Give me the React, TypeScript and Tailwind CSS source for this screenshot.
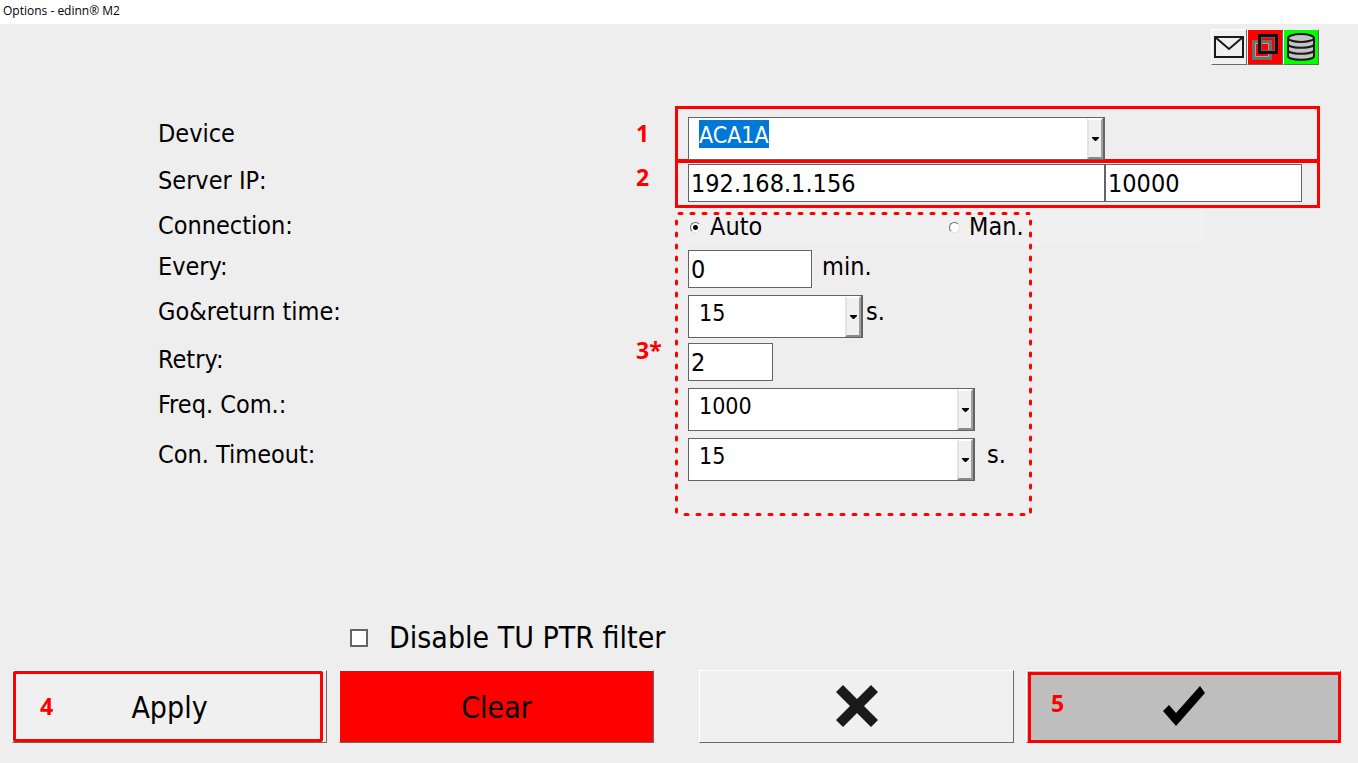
import { useState } from "react";
import type { ReactNode } from "react";

const ROW = "grid grid-cols-[478fr_39px_645fr] items-start";
const FIELD =
  "h-[38px] min-w-0 rounded-none border border-[#646464] bg-white pl-[2px] text-[25px] leading-8 text-black outline-none";

function Marker({ children }: { children: ReactNode }) {
  return (
    <span className="font-['Open_Sans','Noto_Sans',sans-serif] text-[23px] font-bold leading-8 text-[#ff0000]">
      {children}
    </span>
  );
}

type ComboProps = {
  id: string;
  options: string[];
  className: string;
  highlighted?: boolean;
};

function Combo({ id, options, className, highlighted }: ComboProps) {
  const [value, setValue] = useState(options[0]);

  return (
    <div className={`relative h-[43px] min-w-0 ${className}`}>
      <select
        id={id}
        value={value}
        onChange={(e) => setValue(e.target.value)}
        className={`h-full w-full appearance-none rounded-none border border-r-2 border-[#646464] bg-white pb-[7px] pl-[10px] text-[23px] leading-8 outline-none ${
          highlighted
            ? "bg-[linear-gradient(#0078d7,#0078d7)] bg-[length:70px_28px] bg-[position:10px_2px] bg-no-repeat text-white"
            : "text-black"
        }`}
      >
        {options.map((option) => (
          <option key={option} value={option} className="text-black">
            {option}
          </option>
        ))}
      </select>
      <span className="pointer-events-none absolute top-px right-[2px] bottom-px flex w-4 items-center justify-center border-2 border-t-white border-r-[#a0a0a0] border-b-[#8a8a8a] border-l-[#e3e3e3] bg-[#f0f0f0]">
        <svg width="7" height="4" viewBox="0 0 7 4" className="shrink-0">
          <path d="M0 0H7V1L4 4H3L0 1Z" fill="#000" />
        </svg>
      </span>
    </div>
  );
}

type RadioProps = {
  label: string;
  checked: boolean;
  onChange: () => void;
};

function Radio({ label, checked, onChange }: RadioProps) {
  return (
    <label className="flex items-center gap-[9px]">
      <input
        type="radio"
        name="connection"
        checked={checked}
        onChange={onChange}
        className="size-[11px] appearance-none rounded-full border border-t-[#696969] border-r-[#e3e3e3] border-b-[#e3e3e3] border-l-[#696969] bg-white checked:bg-[radial-gradient(circle,#000_2px,#fff_3px)]"
      />
      {label}
    </label>
  );
}

function DottedFrame() {
  const dots = {
    stroke: "#ff0000",
    strokeWidth: 3,
    strokeLinecap: "round" as const,
    strokeDasharray: "3 9",
  };

  return (
    <svg className="h-full w-[358px] max-w-full" aria-hidden="true">
      <line x1="4" y1="4.5" x2="354" y2="4.5" {...dots} />
      <line x1="1.5" y1="12" x2="1.5" y2="99%" {...dots} />
      <line x1="355.5" y1="12" x2="355.5" y2="99%" {...dots} />
      <svg y="100%" overflow="visible">
        <line x1="10" y1="-1.5" x2="351" y2="-1.5" {...dots} />
      </svg>
    </svg>
  );
}

function StatusIcons() {
  const tile =
    "flex size-9 items-center justify-center border border-t-white border-l-white border-r-[#696969] border-b-[#696969]";

  return (
    <div className="flex">
      <button type="button" aria-label="Messages" className={`${tile} bg-[#f0f0f0]`}>
        <svg width="30" height="22" viewBox="0 0 30 22" fill="none" stroke="#1a1a1a" strokeWidth="2">
          <rect x="1" y="1" width="28" height="20" />
          <path d="M1 1L15 13L29 1" />
        </svg>
      </button>
      <button type="button" aria-label="Link" className={`${tile} bg-[#ff0000]`}>
        <svg width="26" height="26" viewBox="0 0 26 26" fill="none">
          <rect x="1.5" y="7.5" width="17" height="17" stroke="#6e6e6e" strokeWidth="3" />
          <rect x="3.5" y="9.5" width="13" height="13" stroke="#a8a0a0" strokeWidth="1" />
          <rect x="7.5" y="1.5" width="17" height="17" stroke="#111" strokeWidth="3" />
          <rect x="9.5" y="3.5" width="13" height="13" stroke="#6e6060" strokeWidth="1" />
        </svg>
      </button>
      <button type="button" aria-label="Database" className={`${tile} bg-[#00ff00]`}>
        <svg width="28" height="28" viewBox="0 0 28 28" fill="#c4c4c4" stroke="#1a1a1a" strokeWidth="2">
          <path d="M1 5V23C1 28 27 28 27 23V5" />
          <ellipse cx="14" cy="5" rx="13" ry="4" />
          <path d="M1 11C1 16 27 16 27 11M1 17C1 22 27 22 27 17" fill="none" />
        </svg>
      </button>
    </div>
  );
}

export default function App() {
  const [connection, setConnection] = useState("auto");
  const [disableFilter, setDisableFilter] = useState(false);

  const button =
    "relative flex h-[73px] flex-1 items-center justify-center border border-t-white border-l-white border-r-[#696969] border-b-[#696969] pt-[3px] text-[30px]";

  return (
    <div className="flex min-h-screen flex-col bg-[#eeeeee] font-['DejaVu_Sans_Condensed','Noto_Sans',sans-serif] text-[25px] leading-[34px] text-black">
      <header className="h-6 bg-white px-[3px] font-['Open_Sans','Noto_Sans',sans-serif] text-xs leading-[22px]">
        Options - edinn® M2
      </header>

      <div className="flex justify-end pt-[5px] pr-[39px]">
        <StatusIcons />
      </div>

      <main className="flex-1 pt-[41px] pr-[38px] pl-[158px]">
        <div className={ROW}>
          <label htmlFor="device" className="pt-[11px]">
            Device
          </label>
          <div className="pt-[11px]">
            <Marker>1</Marker>
          </div>
          <div className="h-[57px] min-w-0 border-[3px] border-b-4 border-[#ff0000] pt-2 pl-[10px]">
            <Combo id="device" options={["ACA1A"]} className="w-[417px] max-w-full" highlighted />
          </div>
        </div>

        <div className={ROW}>
          <label htmlFor="server-ip" className="pt-px">
            Server IP:
          </label>
          <div className="-mt-[2px]">
            <Marker>2</Marker>
          </div>
          <div className="flex h-[45px] min-w-0 border-[3px] border-t-0 border-[#ff0000] pt-px pr-[15px] pl-[10px]">
            <input id="server-ip" defaultValue="192.168.1.156" className={`${FIELD} w-[417px]`} />
            <input aria-label="Port" defaultValue="10000" className={`${FIELD} flex-1`} />
          </div>
        </div>

        <div className="relative mt-px pb-[35px]">
          <div className={ROW}>
            <span>Connection:</span>
            <span />
            <div className="min-w-0 pl-[13px]">
              <div className="flex h-9 w-[518px] max-w-full items-center bg-[#f0f0f0] pl-[2px]">
                <div className="w-[259px]">
                  <Radio label="Auto" checked={connection === "auto"} onChange={() => setConnection("auto")} />
                </div>
                <Radio label="Man." checked={connection === "man"} onChange={() => setConnection("man")} />
              </div>
            </div>
          </div>

          <div className={`${ROW} mt-[5px]`}>
            <label htmlFor="every">Every:</label>
            <span />
            <div className="flex gap-[10px] pl-[13px]">
              <input id="every" defaultValue="0" className={`${FIELD} w-[124px]`} />
              <span>min.</span>
            </div>
          </div>

          <div className={`${ROW} mt-[7px]`}>
            <label htmlFor="go-return">Go&amp;return time:</label>
            <span />
            <div className="flex gap-[3px] pl-[13px]">
              <Combo id="go-return" options={["15", "30", "60"]} className="w-[175px]" />
              <span>s.</span>
            </div>
          </div>

          <div className={`${ROW} mt-[5px]`}>
            <label htmlFor="retry">Retry:</label>
            <div className="-mt-[9px]">
              <Marker>3*</Marker>
            </div>
            <div className="flex pl-[13px]">
              <input id="retry" defaultValue="2" className={`${FIELD} w-[85px]`} />
            </div>
          </div>

          <div className={`${ROW} mt-[7px]`}>
            <label htmlFor="freq">Freq. Com.:</label>
            <span />
            <div className="pl-[13px]">
              <Combo id="freq" options={["1000", "2000", "5000"]} className="w-[287px]" />
            </div>
          </div>

          <div className={`${ROW} mt-[7px]`}>
            <label htmlFor="timeout">Con. Timeout:</label>
            <span />
            <div className="flex gap-3 pl-[13px]">
              <Combo id="timeout" options={["15", "30", "60"]} className="w-[287px]" />
              <span>s.</span>
            </div>
          </div>

          {/* dotted frame drawn over the communication settings */}
          <div className="pointer-events-none absolute inset-0 grid grid-cols-[478fr_39px_645fr]">
            <div className="col-start-3">
              <DottedFrame />
            </div>
          </div>
        </div>
      </main>

      <footer className="pr-[17px] pb-5 pl-3">
        <label className="ml-[338px] flex w-fit items-center gap-[21px] pb-[14px] text-[30px] leading-9">
          <input
            type="checkbox"
            checked={disableFilter}
            onChange={(e) => setDisableFilter(e.target.checked)}
            className="size-[18px] appearance-none border-2 border-[#646464] bg-white checked:bg-[#646464]"
          />
          Disable TU PTR filter
        </label>

        <div className="flex gap-[45px]">
          <div className="flex flex-1 gap-3">
            <button type="button" className={`${button} bg-[#f0f0f0]`}>
              <span className="absolute top-0 right-[3px] bottom-0 left-0 flex items-center rounded-xs border-[3px] border-[#ff0000] pb-[2px] pl-6">
                <Marker>4</Marker>
              </span>
              Apply
            </button>
            <button type="button" className={`${button} bg-[#ff0000]`}>
              Clear
            </button>
          </div>
          <div className="flex flex-1 gap-3">
            <button type="button" aria-label="Cancel" className={`${button} bg-[#f0f0f0]`}>
              <svg width="42" height="42" viewBox="0 0 42 42" className="mb-1">
                <path
                  d="M7 0L21 14L35 0L42 7L28 21L42 35L35 42L21 28L7 42L0 35L14 21L0 7Z"
                  fill="#1a1a1a"
                />
              </svg>
            </button>
            <button type="button" aria-label="Accept" className={`${button} bg-[#bebebe]`}>
              <span className="absolute top-px -right-px -bottom-px left-px flex items-center border-[3px] border-[#ff0000] pb-[10px] pl-5">
                <Marker>5</Marker>
              </span>
              <svg width="42" height="41" viewBox="0 0 42 41" className="mb-1">
                <path d="M0 25L6 19L13 27L37 0L42 7L13 40Z" fill="#000" />
              </svg>
            </button>
          </div>
        </div>
      </footer>
    </div>
  );
}
